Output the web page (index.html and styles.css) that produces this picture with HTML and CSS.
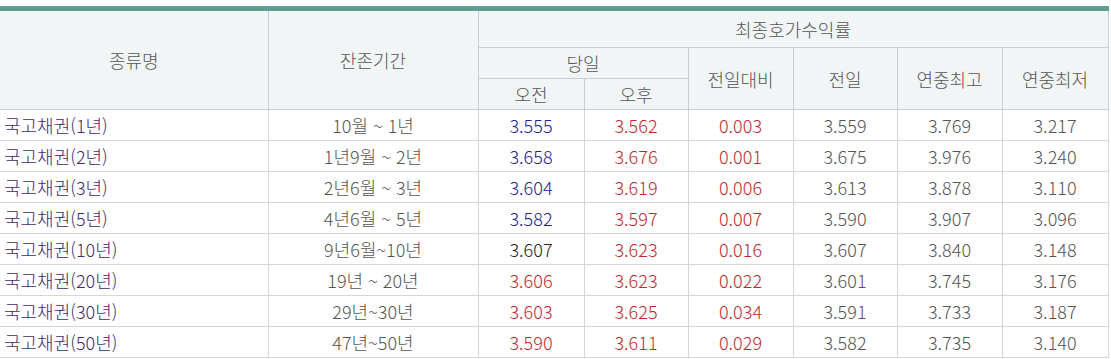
FILE: index.html
```html
<!DOCTYPE html>
<html lang="ko">
<head>
<meta charset="utf-8">
<title>최종호가수익률</title>
<link rel="stylesheet" href="styles.css">
</head>
<body>
<table class="yield">
  <colgroup>
    <col class="c-name"><col class="c-term"><col class="c-am"><col class="c-pm">
    <col class="c-diff"><col class="c-prev"><col class="c-high"><col class="c-low">
  </colgroup>
  <thead>
    <tr class="h1">
      <th rowspan="3">종류명</th>
      <th rowspan="3">잔존기간</th>
      <th colspan="6">최종호가수익률</th>
    </tr>
    <tr class="h2">
      <th colspan="2">당일</th>
      <th rowspan="2">전일대비</th>
      <th rowspan="2">전일</th>
      <th rowspan="2">연중최고</th>
      <th rowspan="2">연중최저</th>
    </tr>
    <tr class="h3">
      <th>오전</th>
      <th>오후</th>
    </tr>
  </thead>
  <tbody>
    <tr><td class="name">국고채권(1년)</td><td>10월 ~ 1년</td><td class="up">3.555</td><td class="dn">3.562</td><td class="dn">0.003</td><td>3.559</td><td>3.769</td><td>3.217</td></tr>
    <tr><td class="name">국고채권(2년)</td><td>1년9월 ~ 2년</td><td class="up">3.658</td><td class="dn">3.676</td><td class="dn">0.001</td><td>3.675</td><td>3.976</td><td>3.240</td></tr>
    <tr><td class="name">국고채권(3년)</td><td>2년6월 ~ 3년</td><td class="up">3.604</td><td class="dn">3.619</td><td class="dn">0.006</td><td>3.613</td><td>3.878</td><td>3.110</td></tr>
    <tr><td class="name">국고채권(5년)</td><td>4년6월 ~ 5년</td><td class="up">3.582</td><td class="dn">3.597</td><td class="dn">0.007</td><td>3.590</td><td>3.907</td><td>3.096</td></tr>
    <tr><td class="name">국고채권(10년)</td><td>9년6월~10년</td><td class="eq">3.607</td><td class="dn">3.623</td><td class="dn">0.016</td><td>3.607</td><td>3.840</td><td>3.148</td></tr>
    <tr><td class="name">국고채권(20년)</td><td>19년 ~ 20년</td><td class="dn">3.606</td><td class="dn">3.623</td><td class="dn">0.022</td><td>3.601</td><td>3.745</td><td>3.176</td></tr>
    <tr><td class="name">국고채권(30년)</td><td>29년~30년</td><td class="dn">3.603</td><td class="dn">3.625</td><td class="dn">0.034</td><td>3.591</td><td>3.733</td><td>3.187</td></tr>
    <tr><td class="name">국고채권(50년)</td><td>47년~50년</td><td class="dn">3.590</td><td class="dn">3.611</td><td class="dn">0.029</td><td>3.582</td><td>3.735</td><td>3.140</td></tr>
  </tbody>
</table>
</body>
</html>
```

FILE: styles.css
```css
html, body {
  margin: 0;
  padding: 0;
  background: #ffffff;
}
body {
  padding-top: 6px;
  font-family: "Noto Sans CJK KR", "Liberation Sans", sans-serif;
  font-size: 18px;
  font-weight: 300;
  color: #555555;
}
.yield {
  width: 1108px;
  border-collapse: collapse;
  table-layout: fixed;
  border-top: 5px solid #5b9e92;
}
.c-name { width: 268px; }
.c-term { width: 210px; }
.c-am { width: 106px; }
.c-pm { width: 104px; }
.c-diff { width: 105px; }
.c-prev { width: 104px; }
.c-high { width: 105px; }
.c-low { width: 106px; }

.yield th {
  background: #f1f5f6;
  font-weight: 300;
  color: #555555;
  border: 1px solid #c5cdd6;
  padding: 0;
  line-height: 20px;
}
.yield th:first-child { border-left: none; }
.yield tr.h1 th { height: 36px; border-top: none; }
.yield tr.h2 th, .yield tr.h3 th { height: 30px; }

.yield td {
  border: 1px solid #d6d6d6;
  height: 30px;
  padding: 0;
  text-align: center;
  line-height: 20px;
  color: #555555;
}
.yield td:first-child { border-left: none; }
.yield td.name {
  text-align: left;
  padding-left: 4px;
  color: #432a6c;
}
.yield td.up { color: #232394; }
.yield td.dn { color: #c2282e; }
.yield td.eq { color: #222222; }
```
